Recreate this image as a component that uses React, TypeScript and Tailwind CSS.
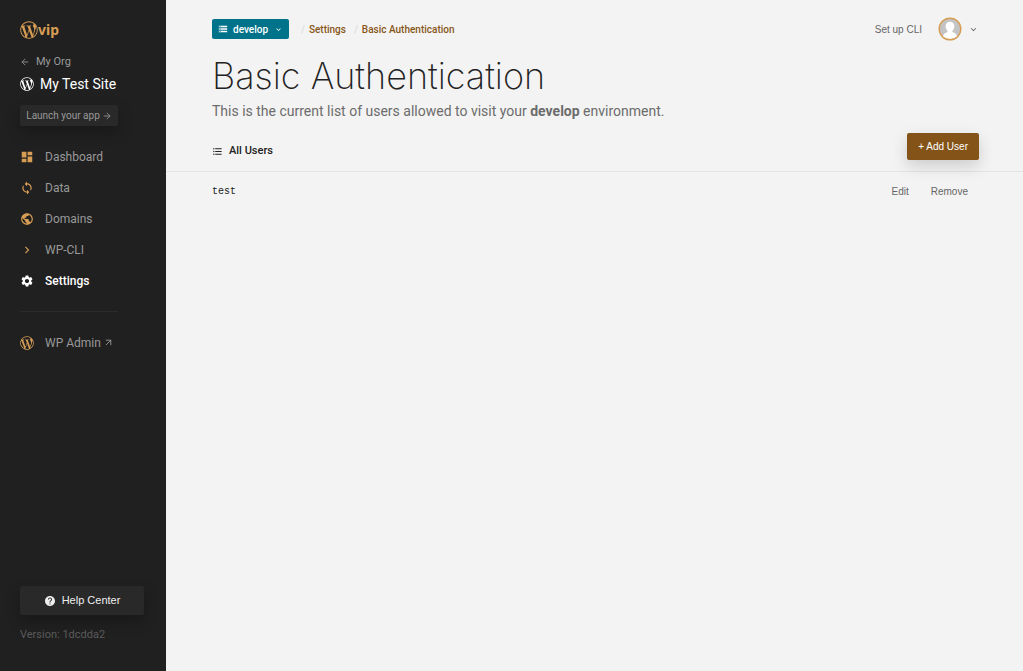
import {
  MdChevronRight,
  MdDashboard,
  MdFormatListBulleted,
  MdHelp,
  MdKeyboardArrowDown,
  MdLoop,
  MdPublic,
  MdSettings,
  MdStorage,
} from "react-icons/md";
import { FaWordpressSimple } from "react-icons/fa";
import { ArrowLeft, ArrowRight, ArrowUpRight } from "lucide-react";

const navItems = [
  { icon: MdDashboard, label: "Dashboard" },
  { icon: MdLoop, label: "Data" },
  { icon: MdPublic, label: "Domains" },
  { icon: MdChevronRight, label: "WP-CLI" },
  { icon: MdSettings, label: "Settings", active: true },
];

const users = ["test"];

function Sidebar() {
  return (
    <aside className="flex w-[166px] shrink-0 flex-col bg-[#202020] px-5 pt-5 pb-7 text-[#999]">
      {/* Logo */}
      <a href="#" className="flex h-5 items-center text-[#d79d54]">
        <FaWordpressSimple size={18} />
        <span className="font-['Noto_Sans'] text-sm leading-5 font-bold">vip</span>
      </a>

      {/* Site */}
      <a href="#" className="mt-3 flex h-5 items-center gap-1.5 text-[11px]">
        <ArrowLeft size={10} />
        My Org
      </a>
      <a href="#" className="mt-0.5 flex h-5 items-center gap-1.5 text-sm whitespace-nowrap text-white">
        <FaWordpressSimple size={14} />
        My Test Site
      </a>
      <a
        href="#"
        className="mt-[11px] flex h-[21px] w-[98px] items-center justify-center gap-0.5 rounded-xs bg-[#292929] text-[10px] whitespace-nowrap shadow-[0_6px_14px_rgba(0,0,0,0.25)]"
      >
        Launch your app
        <ArrowRight size={10} />
      </a>

      {/* Navigation */}
      <nav className="mt-[15px] text-xs">
        <ul>
          {navItems.map((item) => (
            <li key={item.label}>
              <a
                href="#"
                className={
                  item.active
                    ? "flex h-[31px] items-center gap-[11px] font-medium text-white"
                    : "flex h-[31px] items-center gap-[11px]"
                }
              >
                <item.icon size={14} className={item.active ? "text-white" : "text-[#d79d54]"} />
                {item.label}
              </a>
            </li>
          ))}
        </ul>
        <hr className="mt-[15px] w-[98px] border-[#2b2b2b]" />
        <a href="#" className="mt-[15px] flex h-[31px] items-center gap-[11px]">
          <FaWordpressSimple size={14} className="text-[#d79d54]" />
          <span className="flex items-center gap-0.5">
            WP Admin
            <ArrowUpRight size={11} />
          </span>
        </a>
      </nav>

      {/* Footer */}
      <div className="mt-auto">
        <button
          type="button"
          className="flex h-[29px] w-[124px] items-center justify-center gap-1.5 rounded-xs bg-[#292929] font-['Liberation_Sans',sans-serif] text-[11px] text-[#eee] shadow-[0_6px_14px_rgba(0,0,0,0.25)]"
        >
          <MdHelp size={12} />
          Help Center
        </button>
        <p className="mt-3 text-[11px] leading-4 text-[#5a5a5a]">Version: 1dcdda2</p>
      </div>
    </aside>
  );
}

function TopBar() {
  return (
    <header className="flex h-6 items-center justify-between">
      <div className="flex items-center">
        <button
          type="button"
          className="flex h-5 items-center rounded-xs bg-[#00738a] px-1.5 text-[10px] font-medium text-white"
        >
          <MdStorage size={10} className="mr-[5px]" />
          develop
          <MdKeyboardArrowDown size={9} className="ml-1.5" />
        </button>
        <nav aria-label="Breadcrumb" className="ml-3 flex items-center gap-1 text-[10px] font-medium text-[#875618]">
          <span className="text-[#ddd]">/</span>
          <a href="#">Settings</a>
          <span className="ml-1 text-[#ddd]">/</span>
          <a href="#">Basic Authentication</a>
        </nav>
      </div>
      <div className="flex items-center text-[#666]">
        <a href="#" className="font-['Liberation_Sans',sans-serif] text-[10px]">
          Set up CLI
        </a>
        <button type="button" aria-label="Account" className="ml-4 flex items-center gap-1.5">
          <svg width="24" height="24" viewBox="0 0 24 24">
            <circle cx="12" cy="12" r="11" fill="#c4c4c4" />
            <path
              d="M12 4.8c-2.7 0-4.4 1.9-4.4 4.5 0 1.9.8 3.5 2 4.5v1.1c-2.3.7-4.2 1.9-4.7 4.5A10.5 10.5 0 0 0 12 22.4a10.5 10.5 0 0 0 7.1-3c-.5-2.6-2.4-3.8-4.7-4.5v-1.1c1.2-1 2-2.6 2-4.5 0-2.6-1.7-4.5-4.4-4.5z"
              fill="#fff"
            />
            <circle cx="12" cy="12" r="10.8" fill="none" stroke="#d79d54" strokeWidth="1.4" />
          </svg>
          <MdKeyboardArrowDown size={11} />
        </button>
      </div>
    </header>
  );
}

export default function App() {
  return (
    <div className="flex min-h-screen bg-[#f3f3f3] font-[Roboto,sans-serif]">
      <Sidebar />
      <main className="min-w-0 flex-1">
        <div className="pt-[17px] pr-11 pl-[46px]">
          <TopBar />
          <h1 className="mt-3 font-[Inter,sans-serif] text-4xl leading-[46px] font-extralight text-[#222]">
            Basic Authentication
          </h1>
          <p className="mt-0.5 text-sm leading-5 text-[#6c6c6c]">
            This is the current list of users allowed to visit your <strong>develop</strong> environment.
          </p>
        </div>

        {/* Users */}
        <div className="mt-3 flex h-[39px] items-start justify-between border-b border-[#e4e4e4] pr-11 pl-[46px]">
          <h2 className="flex h-9 items-center gap-1.5 text-[11px] font-medium text-[#222]">
            <MdFormatListBulleted size={11} />
            All Users
          </h2>
          <button
            type="button"
            className="h-[27px] shrink-0 rounded-xs bg-[#835317] px-[11px] font-['Liberation_Sans',sans-serif] text-[10px] text-white shadow-[0_6px_16px_rgba(0,0,0,0.16)]"
          >
            + Add User
          </button>
        </div>
        <table className="w-full text-[10px]">
          <tbody>
            {users.map((user) => (
              <tr key={user} className="h-[39px]">
                <td className="pl-[46px] font-['Liberation_Mono',monospace] text-[#222]">{user}</td>
                <td className="pr-[55px] text-right font-['Liberation_Sans',sans-serif] text-[#666]">
                  <button type="button">Edit</button>
                  <button type="button" className="ml-[22px]">
                    Remove
                  </button>
                </td>
              </tr>
            ))}
          </tbody>
        </table>
      </main>
    </div>
  );
}
